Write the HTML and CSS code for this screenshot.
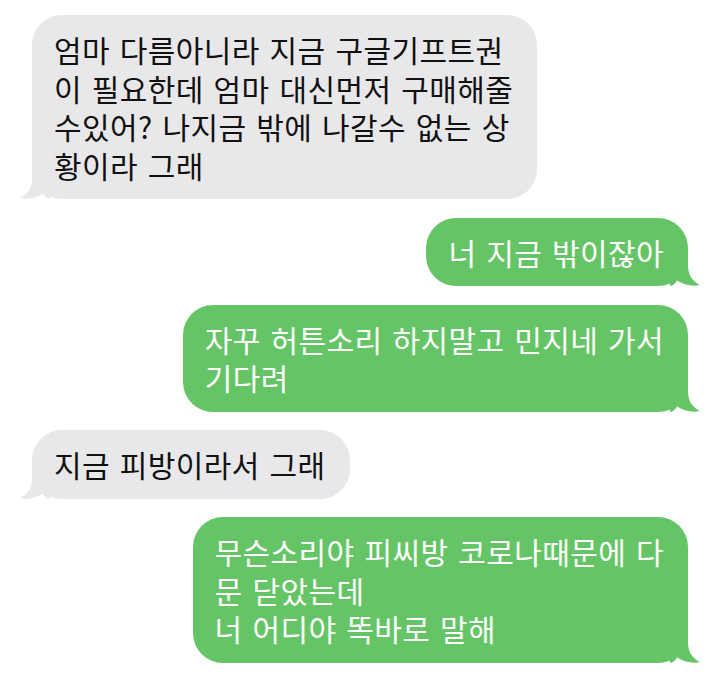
FILE: index.html
```html
<!DOCTYPE html>
<html lang="ko">
<head>
    <meta charset="UTF-8">
    <meta name="viewport" content="width=device-width, initial-scale=1.0">
    <title>메시지</title>
    <link rel="stylesheet" href="styles.css">
</head>
<body>
    <!-- 대화 목록 -->
    <div class="thread">
        <div class="bubble in">
            <p>엄마 다름아니라 지금 구글기프트권<br>이 필요한데 엄마 대신먼저 구매해줄<br>수있어? 나지금 밖에 나갈수 없는 상<br>황이라 그래</p>
            <svg class="tail" viewBox="0 0 30 30"><path d="M0 0H18V9C18 19 22 25 30 29C23 30.5 15 29.5 7 24.5C5 27.5 3 30 0 30Z"/></svg>
        </div>
        <div class="bubble out">
            <p>너 지금 밖이잖아</p>
            <svg class="tail" viewBox="0 0 30 30"><path d="M0 0H18V9C18 19 22 25 30 29C23 30.5 15 29.5 7 24.5C5 27.5 3 30 0 30Z"/></svg>
        </div>
        <div class="bubble out">
            <p>자꾸 허튼소리 하지말고 민지네 가서<br>기다려</p>
            <svg class="tail" viewBox="0 0 30 30"><path d="M0 0H18V9C18 19 22 25 30 29C23 30.5 15 29.5 7 24.5C5 27.5 3 30 0 30Z"/></svg>
        </div>
        <div class="bubble in">
            <p>지금 피방이라서 그래</p>
            <svg class="tail" viewBox="0 0 30 30"><path d="M0 0H18V9C18 19 22 25 30 29C23 30.5 15 29.5 7 24.5C5 27.5 3 30 0 30Z"/></svg>
        </div>
        <div class="bubble out">
            <p>무슨소리야 피씨방 코로나때문에 다<br>문 닫았는데<br>너 어디야 똑바로 말해</p>
            <svg class="tail" viewBox="0 0 30 30"><path d="M0 0H18V9C18 19 22 25 30 29C23 30.5 15 29.5 7 24.5C5 27.5 3 30 0 30Z"/></svg>
        </div>
    </div>
</body>
</html>
```

FILE: styles.css
```css
html {
    background: #fff;
}
body {
    margin: 0;
    padding: 15px 32px;
    font-family: "Noto Sans CJK KR", "Noto Sans", sans-serif;
}
.thread {
    display: flex;
    flex-direction: column;
    gap: 18.5px;
}
.bubble {
    position: relative;
    padding: 15px 24px 15px 22px;
    border-radius: 30px;
}
.bubble p {
    margin: 0;
    font-size: 30px;
    line-height: 38.5px;
    letter-spacing: 0.4px;
    word-spacing: 1px;
    white-space: nowrap;
    position: relative;
    z-index: 1;
}
/* 받은 메시지 */
.in {
    align-self: flex-start;
    background: #e8e8ea;
    color: #111;
}
/* 보낸 메시지 */
.out {
    align-self: flex-end;
    background: #65c566;
    color: #fff;
}
.tail {
    position: absolute;
    bottom: 0;
    width: 30px;
    height: 30px;
}
.out .tail {
    right: -12px;
    fill: #65c566;
}
.in .tail {
    left: -12px;
    fill: #e8e8ea;
    transform: scaleX(-1);
}
```
